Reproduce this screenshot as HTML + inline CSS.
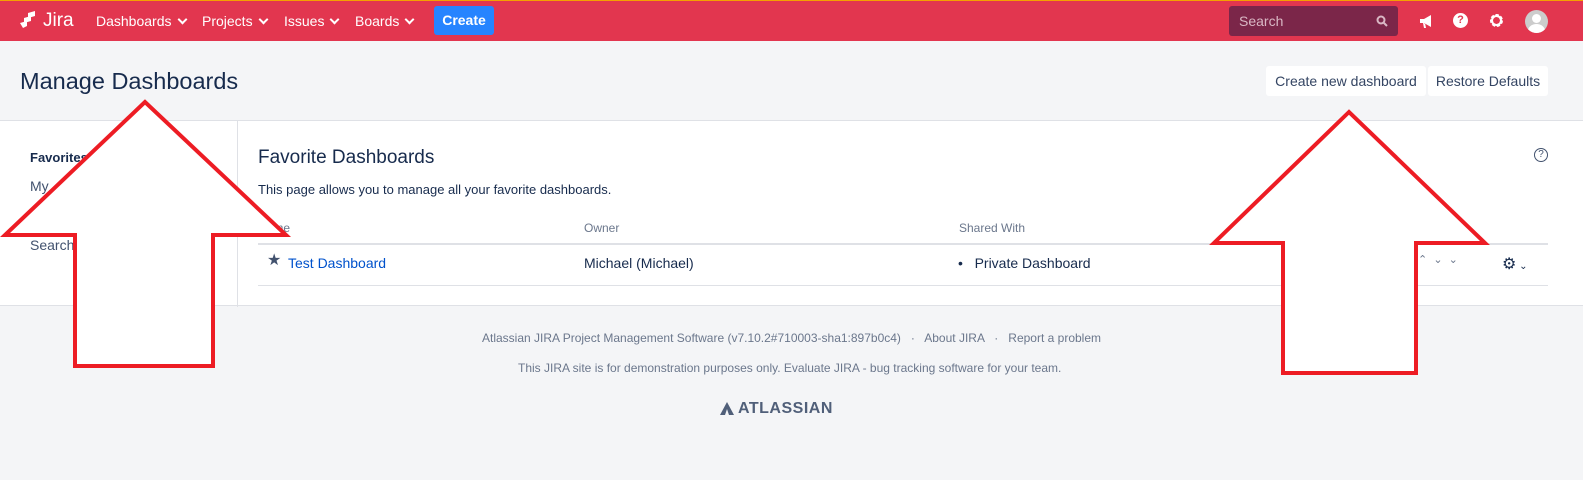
<!DOCTYPE html>
<html><head><meta charset="utf-8"><style>
*{margin:0;padding:0;box-sizing:border-box}
body{width:1583px;height:480px;overflow:hidden;background:#f4f5f7;font-family:"Liberation Sans",sans-serif;color:#172b4d;font-size:14px;position:relative}
.nav{position:absolute;left:0;top:0;width:1583px;height:41px;background:#e2364f;border-top:1px solid #f5a000}
.nav .it{position:absolute;top:12px;color:#fff;font-size:14px}
.nav .it:after{content:"";display:inline-block;width:5px;height:5px;border-right:2px solid #fff;border-bottom:2px solid #fff;transform:rotate(45deg);margin-left:7px;position:relative;top:-3px}
.create{position:absolute;left:434px;top:5px;width:60px;height:29px;background:#2684ff;border-radius:3px;color:#fff;font-weight:bold;text-align:center;line-height:29px;font-size:14px}
.search{position:absolute;left:1229px;top:5px;width:169px;height:30px;background:#7b2649;border-radius:3px;color:#d9b7c4;padding:7px 10px;font-size:14px}
h1{position:absolute;left:20px;top:68px;font-size:23.5px;font-weight:normal;color:#172b4d}
.btn{position:absolute;top:66px;height:30px;background:#fff;border-radius:3px;line-height:30px;text-align:center;color:#344563;font-size:14px}
.panel{position:absolute;left:0;top:120px;width:1583px;height:186px;background:#fff;border-top:1px solid #dfe1e6;border-bottom:1px solid #dfe1e6}
.side{position:absolute;left:237px;top:0;width:1px;height:186px;background:#dfe1e6}
.t{position:absolute;white-space:nowrap}
.foot{position:absolute;font-size:12px;color:#6b778c;white-space:nowrap}
</style></head><body>
<div class="nav">
<svg style="position:absolute;left:20px;top:10px" width="20" height="18" viewBox="0 0 20 18"><path d="M8 2l7-2v5l-7 2zM4 7l7-2v5l-7 2zM0 12l7-2v5l-4 2z" fill="#fff"/></svg>
<span class="t" style="left:43px;top:9px;color:#fff;font-size:19px">Jira</span>
<span class="it" style="left:96px">Dashboards</span>
<span class="it" style="left:202px">Projects</span>
<span class="it" style="left:284px">Issues</span>
<span class="it" style="left:355px">Boards</span>
<div class="create">Create</div>
<div class="search">Search<svg style="position:absolute;right:10px;top:9px" width="12" height="12"><circle cx="5" cy="5" r="3.5" stroke="#d9b7c4" stroke-width="2" fill="none"/><path d="M7.5 7.5l3.5 3.5" stroke="#d9b7c4" stroke-width="2"/></svg></div>
<svg style="position:absolute;left:1418px;top:12px" width="17" height="16"><path d="M2 6h4l7-4v12l-7-4H2z M5 10l1 5h2l-1-5" fill="#fff"/></svg>
<div style="position:absolute;left:1453px;top:12px;width:15px;height:15px;border-radius:50%;background:#fff;color:#e2364f;font-size:11px;font-weight:bold;text-align:center;line-height:15px">?</div>
<svg style="position:absolute;left:1488px;top:11px" width="17" height="17" viewBox="0 0 17 17"><circle cx="8.5" cy="8.5" r="5" stroke="#fff" stroke-width="3" fill="none" stroke-dasharray="3 1.5"/><circle cx="8.5" cy="8.5" r="4.5" stroke="#fff" stroke-width="2" fill="none"/></svg>
<div style="position:absolute;left:1525px;top:9px;width:23px;height:23px;border-radius:50%;background:#ccc;overflow:hidden"><div style="position:absolute;left:7px;top:4px;width:9px;height:9px;border-radius:50%;background:#fff"></div><div style="position:absolute;left:3px;top:14px;width:17px;height:14px;border-radius:50%;background:#fff"></div></div>
</div>
<h1>Manage Dashboards</h1>
<div class="btn" style="left:1266px;width:160px">Create new dashboard</div>
<div class="btn" style="left:1428px;width:120px">Restore Defaults</div>
<div class="panel">
<div class="side"></div>
<span class="t" style="left:30px;top:29px;font-weight:bold;font-size:13px">Favorites</span>
<span class="t" style="left:30px;top:57px;color:#42526e">My</span>
<span class="t" style="left:30px;top:116px;color:#42526e">Search</span>
<span class="t" style="left:258px;top:26px;font-size:19px">Favorite Dashboards</span>
<span class="t" style="left:258px;top:61px;font-size:13px">This page allows you to manage all your favorite dashboards.</span>
<span class="t" style="left:258px;top:100px;font-size:12px;color:#6b778c">Name</span>
<span class="t" style="left:584px;top:100px;font-size:12px;color:#6b778c">Owner</span>
<span class="t" style="left:959px;top:100px;font-size:12px;color:#6b778c">Shared With</span>
<div style="position:absolute;left:258px;top:122px;width:1290px;height:2px;background:#dfe1e6"></div>
<span class="t" style="left:267px;top:129px;font-size:16px;color:#42526e">★</span>
<span class="t" style="left:288px;top:134px;color:#0052cc">Test Dashboard</span>
<span class="t" style="left:584px;top:134px">Michael (Michael)</span>
<span class="t" style="left:958px;top:134px">•&nbsp;&nbsp; Private Dashboard</span>
<span class="t" style="left:1418px;top:132px;font-size:11px;color:#6b778c">⌃ &nbsp;⌄ &nbsp;⌄</span>
<span class="t" style="left:1502px;top:133px;font-size:16px">⚙<span style="font-size:10px"> ⌄</span></span>
<div style="position:absolute;left:258px;top:164px;width:1290px;height:1px;background:#dfe1e6"></div>
<div style="position:absolute;left:1534px;top:27px;width:14px;height:14px;border:1.5px solid #42526e;border-radius:50%;font-size:10px;text-align:center;line-height:11px;color:#42526e">?</div>
</div>
<span class="foot" style="left:482px;top:331px">Atlassian JIRA Project Management Software (v7.10.2#710003-sha1:897b0c4) &nbsp;&nbsp;·&nbsp;&nbsp; About JIRA &nbsp;&nbsp;·&nbsp;&nbsp; Report a problem</span>
<span class="foot" style="left:518px;top:361px">This JIRA site is for demonstration purposes only. Evaluate JIRA - bug tracking software for your team.</span>
<svg style="position:absolute;left:720px;top:402px" width="14" height="13"><path d="M7 0L0 13h5L7 7l2 6h5z" fill="#505f79"/></svg>
<span class="t" style="left:738px;top:400px;font-size:16px;font-weight:bold;color:#505f79;letter-spacing:0.5px">ATLASSIAN</span>
<svg style="position:absolute;left:0;top:0" width="1583" height="480">
<polygon points="145,102 5,235 75,235 75,366 213,366 213,235 286,235" fill="#fff" stroke="#ed1c24" stroke-width="4" stroke-linejoin="miter"/>
<polygon points="1349,112 1214,243 1283,243 1283,373 1416,373 1416,243 1485,243" fill="#fff" stroke="#ed1c24" stroke-width="4"/>
</svg>
</body></html>
